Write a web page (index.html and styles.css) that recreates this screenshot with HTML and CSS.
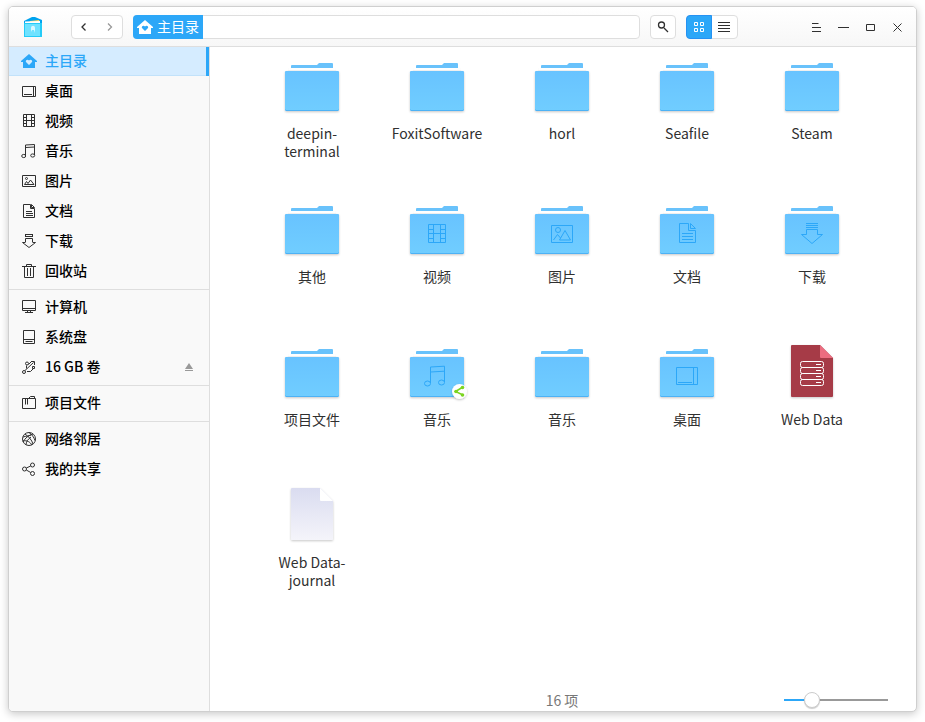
FILE: index.html
```
<!DOCTYPE html>
<html lang="zh-CN">
<head>
<meta charset="utf-8">
<meta name="viewport" content="width=device-width, initial-scale=1">
<title>主目录</title>
<link rel="stylesheet" href="styles.css">
</head>
<body>
<svg class="defs" aria-hidden="true">
  <defs>
    <linearGradient id="front" x1="0" y1="0" x2="0" y2="1"><stop offset="0" stop-color="#68c3ff"/><stop offset="1" stop-color="#70cdff"/></linearGradient>
    <linearGradient id="blank" x1="0" y1="0" x2="0" y2="1"><stop offset="0" stop-color="#dadcf0"/><stop offset="1" stop-color="#f4f4fa"/></linearGradient>
    <filter id="soft" x="-20%" y="-20%" width="140%" height="140%"><feDropShadow dx="0" dy="1" stdDeviation="1" flood-color="#000" flood-opacity=".22"/></filter>
    <symbol id="home" viewBox="0 0 16 16"><path fill="currentColor" fill-rule="evenodd" d="M8 1 16 8v1h-2v6H2V9H0V8L8 1ZM8 12l3-3c1-1.500-1.500-3.200-3-1.500C6.500 5.800 4 7.500 5 9Z"/></symbol>
  </defs>
  <symbol id="folder" viewBox="0 0 65 64">
    <path fill="#69c2fb" d="M11 10q0-1 1-1h25l2-2h13q1 0 1 1v5H11Z"/>
    <path fill="#f4f4f4" d="M9 12h46l2 4H7Z"/>
    <path fill="#fff" d="M9 12h46l1 2H8Z"/>
    <rect x="5" y="15" width="54" height="40" rx="1.500" fill="#4db2f5" filter="url(#soft)"/>
    <rect x="5" y="15" width="54" height="39" rx="1.500" fill="url(#front)"/>
  </symbol>
</svg>
<div class="window">
  <header class="titlebar">
    <svg class="logo" viewBox="0 0 20 20" aria-hidden="true">
      <path fill="#00a3ef" d="M1 4 9 0h3l7 3v3H1Z"/><path fill="#ffd25a" d="m7 4 9-1 1 3H6Z"/><path fill="#fff" d="M2 4.500 17 4v3H2Z"/><path fill="#24cbf7" d="M1 6h18v14H1Z"/><path fill="#6ee2ff" d="M2 7h15v12H2Z"/><path fill="#fff" opacity=".75" d="M8 15v-4c0-3 4-3 4 0v5l-1-3H9Z"/>
    </svg>
    <div class="group history">
      <button type="button" aria-label="后退"><svg class="ico" viewBox="0 0 16 16"><path class="thick" d="M9.500 4.500 6 8l3.500 3.500"/></svg></button>
      <button type="button" class="dim" aria-label="前进"><svg class="ico" viewBox="0 0 16 16"><path class="thick" d="M8 4.500 11.500 8 8 11.500"/></svg></button>
    </div>
    <div class="address">
      <button type="button" class="crumb"><svg class="ico"><use href="#home"/></svg><span>主目录</span></button>
      <input type="text" aria-label="地址">
    </div>
    <button type="button" class="group search" aria-label="搜索"><svg class="ico" viewBox="0 0 16 16"><circle class="thick" cx="6.500" cy="6" r="3"/><path class="thick" d="m9 9 4 4"/></svg></button>
    <div class="group views">
      <button type="button" class="on" aria-label="图标视图"><svg class="ico" viewBox="0 0 16 16"><path d="M3.500 3.500h3v3h-3zM9.500 3.500h3v3h-3zM3.500 9.500h3v3h-3zM9.500 9.500h3v3h-3z"/></svg></button>
      <button type="button" aria-label="列表视图"><svg class="ico" viewBox="0 0 16 16"><path d="M2 3.500h12M2 6.500h12M2 9.500h12M2 12.500h12"/></svg></button>
    </div>
    <div class="controls">
      <button type="button" aria-label="菜单"><svg class="ico" viewBox="0 0 16 16"><path d="M4 4.500h6.500M4 8.500h9M4 12.500h9"/></svg></button>
      <button type="button" aria-label="最小化"><svg class="ico" viewBox="0 0 16 16"><path d="M3 8.500h11"/></svg></button>
      <button type="button" aria-label="最大化"><svg class="ico" viewBox="0 0 16 16"><path d="M4.500 5.500h8v6h-8z"/></svg></button>
      <button type="button" aria-label="关闭"><svg class="ico" viewBox="0 0 16 16"><path d="m4.500 4.500 8 8M12.500 4.500l-8 8"/></svg></button>
    </div>
  </header>
  <div class="body">
    <nav class="sidebar" aria-label="位置">
      <ul>
        <li><a class="current" href="#"><svg class="ico"><use href="#home"/></svg><span>主目录</span></a></li>
        <li><a href="#"><svg class="ico" viewBox="0 0 16 16"><path d="M1.500 3.500h13v10h-13zM12.500 3.500v10M3 11.500h8"/></svg><span>桌面</span></a></li>
        <li><a href="#"><svg class="ico" viewBox="0 0 16 16"><path d="M2.500 1.500h11v12h-11zM5.500 1.500v12M10.500 1.500v12M5.500 7.500h5M2.500 4.500h3M2.500 7.500h3M2.500 10.500h3M10.500 4.500h3M10.500 7.500h3M10.500 10.500h3"/></svg><span>视频</span></a></li>
        <li><a href="#"><svg class="ico" viewBox="0 0 16 16"><path d="M4.500 12.500V2l9-.5v10.500M4.500 4.500l9-.5"/><ellipse cx="2.700" cy="13" rx="2" ry="1.600"/><ellipse cx="11.700" cy="12.500" rx="2" ry="1.600"/></svg><span>音乐</span></a></li>
        <li><a href="#"><svg class="ico" viewBox="0 0 16 16"><path d="M1.500 2.500h13v11h-13zM3.500 11.500l2-3 1.500 2L9.500 7l3.500 4.500z"/><circle cx="5.500" cy="5.500" r="1"/></svg><span>图片</span></a></li>
        <li><a href="#"><svg class="ico" viewBox="0 0 16 16"><path d="M2.500 1.500h7v4h4v9h-11zM10.500 1.500v3h3zM5 8.500h6M5 10.500h7M5 12.500h7"/></svg><span>文档</span></a></li>
        <li><a href="#"><svg class="ico" viewBox="0 0 16 16"><path d="M4 1.500h8M4 3.500h8M4.500 1.500v2M11.500 1.500v2M4.500 9V5.500h7V9M1.500 9.500h3M11.500 9.500h3M1.500 9.500 8 14.500l6.500-5"/></svg><span>下载</span></a></li>
        <li><a href="#"><svg class="ico" viewBox="0 0 16 16"><path d="M1 3.500h14M5.500 3.500v-2h5v2M3.500 3.500v11h9v-11M6.500 5v8M9.500 5v8"/></svg><span>回收站</span></a></li>
      </ul>
      <ul>
        <li><a href="#"><svg class="ico" viewBox="0 0 16 16"><path d="M1.500 1.500h13v10h-13zM1.500 9.500h13M6.500 11.500v2M9.500 11.500v2M4 13.500h8"/></svg><span>计算机</span></a></li>
        <li><a href="#"><svg class="ico" viewBox="0 0 16 16"><path d="M2.500 1.500h11v13h-11zM2.500 10.500h11M4.500 12.500h7"/></svg><span>系统盘</span></a></li>
        <li><a href="#"><svg class="ico" viewBox="0 0 16 16"><circle cx="3" cy="13" r="1.500"/><circle cx="6" cy="4.500" r="1.500"/><path d="m4 11.500 8.500-8M10 2.500h3.500V6M5.500 6.500v3M6 12.500h3.500l3-3M11.500 7.500h2v2h-2zM7.500 5.500l3-3"/></svg><span>16 GB 卷</span></a><button type="button" class="eject" aria-label="弹出"><svg class="ico" viewBox="0 0 16 16"><path class="solid" d="m8 4 4 6H4zM4 11h8v1H4z"/></svg></button></li>
      </ul>
      <ul>
        <li><a href="#"><svg class="ico" viewBox="0 0 16 16"><path d="M1.500 3.500h13v10h-13zM7.500 3.500l2-2h4v2M4.500 3.500v6M6.500 3.500v6"/></svg><span>项目文件</span></a></li>
      </ul>
      <ul>
        <li><a href="#"><svg class="ico" viewBox="0 0 16 16"><circle cx="8" cy="8" r="6.500"/><path d="M4 3c3 2 7 6 8 10M12 3C8 4 4 7 2 11M8 1.500c3 2 5 5 6 8M2 6c3-1 6-1 8-2M5 14c0-3 2-6 5-8M2 10c4-1 7 1 9 4"/></svg><span>网络邻居</span></a></li>
        <li><a href="#"><svg class="ico" viewBox="0 0 16 16"><circle cx="3.500" cy="8" r="2"/><circle cx="11.500" cy="4" r="2"/><circle cx="11.500" cy="12.500" r="2"/><path d="m5.300 7 4.400-2M5.300 9l4.400 2.500"/></svg><span>我的共享</span></a></li>
      </ul>
    </nav>
    <main class="content">
      <ul class="files">
        <li><svg class="pic"><use href="#folder"/></svg><span>deepin-terminal</span></li>
        <li><svg class="pic"><use href="#folder"/></svg><span>FoxitSoftware</span></li>
        <li><svg class="pic"><use href="#folder"/></svg><span>horl</span></li>
        <li><svg class="pic"><use href="#folder"/></svg><span>Seafile</span></li>
        <li><svg class="pic"><use href="#folder"/></svg><span>Steam</span></li>
        <li><svg class="pic"><use href="#folder"/></svg><span>其他</span></li>
        <li><svg class="pic" viewBox="0 0 65 64"><use href="#folder"/><path class="emblem" d="M23.500 25.500h17v18h-17zM28.500 25.500v18M35.500 25.500v18M28.500 34.500h7M23.500 30.500h5M23.500 34.500h5M23.500 39.500h5M35.500 30.500h5M35.500 34.500h5M35.500 39.500h5"/></svg><span>视频</span></li>
        <li><svg class="pic" viewBox="0 0 65 64"><use href="#folder"/><path class="emblem" d="M21.500 26.500h21v17h-21zM23.500 41l4-5.500 3 3.500M29.500 41l5.500-9.500 5.500 9.500z"/><circle class="emblem" cx="28" cy="31" r="2.500"/></svg><span>图片</span></li>
        <li><svg class="pic" viewBox="0 0 65 64"><use href="#folder"/><path class="emblem" d="M24.500 24.500h9v7h7v12h-16zM35.500 24.500v5h5zM27 34.500h11M27 37.500h11M27 40.500h11"/></svg><span>文档</span></li>
        <li><svg class="pic" viewBox="0 0 65 64"><use href="#folder"/><path class="emblem" d="M26 24.500h12M26 26.500h12M26 28.500h12M26.500 30.500h11v5h5L32 44.500 21.500 35.500h5z"/></svg><span>下载</span></li>
        <li><svg class="pic"><use href="#folder"/></svg><span>项目文件</span></li>
        <li><svg class="pic" viewBox="0 0 65 64"><use href="#folder"/><path class="emblem" d="M25.500 41V25l14-.8V40M25.500 30l14-.8"/><ellipse class="emblem" cx="22.500" cy="41.500" rx="3" ry="2.500"/><ellipse class="emblem" cx="36.500" cy="40.500" rx="3" ry="2.500"/><circle cx="54.500" cy="49.500" r="7.500" fill="#fff" filter="url(#soft)"/><path d="m58 45-7.500 4.500L58 53" fill="none" stroke="#7bd420" stroke-width="1.500"/><g fill="#7bd420"><circle cx="51" cy="49.500" r="1.800"/><circle cx="57.500" cy="45.500" r="1.800"/><circle cx="57.500" cy="53" r="1.800"/></g></svg><span>音乐</span></li>
        <li><svg class="pic"><use href="#folder"/></svg><span>音乐</span></li>
        <li><svg class="pic" viewBox="0 0 65 64"><use href="#folder"/><path class="emblem" d="M21.500 25.500h21v17h-21zM38.500 25.500v17M23 40.500h14"/></svg><span>桌面</span></li>
        <li><svg class="pic" viewBox="0 0 65 64"><path d="M12 3h28l13 13v38q0 1-1 1H12q-1 0-1-1V4q0-1 1-1Z" fill="#a63a46" filter="url(#soft)"/><path d="M40 3v12q0 1 1 1h12Z" fill="#ec6d80"/><g fill="none" stroke="#fff"><rect x="20.500" y="19.500" width="23" height="6" rx="2"/><rect x="20.500" y="25.500" width="23" height="6" rx="2"/><rect x="20.500" y="31.500" width="23" height="6" rx="2"/><rect x="20.500" y="37.500" width="23" height="6" rx="2"/><path d="M36 22.500h5M36 28.500h5M36 34.500h5M36 40.500h5"/></g></svg><span>Web Data</span></li>
        <li><svg class="pic" viewBox="0 0 65 64"><path d="M12 3h28l13 13v38q0 1-1 1H12q-1 0-1-1V4q0-1 1-1Z" fill="url(#blank)" filter="url(#soft)"/><path d="M40 3v12q0 1 1 1h12Z" fill="#fff"/></svg><span>Web Data-journal</span></li>
      </ul>
      <footer class="status">
        <span class="count">16 项</span>
        <input type="range" min="0" max="100" value="23" aria-label="图标大小">
      </footer>
    </main>
  </div>
</div>
</body>
</html>
```
FILE: styles.css
```
* { box-sizing: border-box; }

body {
  margin: 0;
  padding: 6px 8px 10px;
  background: #fff;
  color: #303030;
  font: 14px/18px "Noto Sans CJK SC", "Noto Sans", sans-serif;
}

ul { list-style: none; margin: 0; padding: 0; }

button {
  display: flex;
  align-items: center;
  justify-content: center;
  padding: 0;
  border: 0;
  background: none;
  color: inherit;
  font: inherit;
}

.defs { position: absolute; width: 0; height: 0; }

.ico {
  flex: none;
  width: 16px;
  height: 16px;
  fill: none;
  stroke: currentColor;
}
.ico use { stroke: none; }
.ico .thick { stroke-width: 1.3; }
.ico .solid { fill: currentColor; stroke: none; }

.window {
  display: flex;
  flex-direction: column;
  min-height: calc(100vh - 16px);
  border: 1px solid #cfcfcf;
  border-radius: 5px;
  background: #fff;
  box-shadow: 0 2px 8px rgba(0, 0, 0, .22);
  overflow: hidden;
}

.titlebar {
  position: relative;
  z-index: 1;
  display: flex;
  align-items: center;
  gap: 10px;
  height: 39px;
  padding: 1px 6px 0 14px;
  background: linear-gradient(#fff, #f7f7f7);
  box-shadow: 0 1px #dedede;
}

.logo { width: 20px; height: 20px; margin-right: 18px; }

.group {
  display: flex;
  height: 24px;
  border: 1px solid #dedede;
  border-radius: 4px;
  background: #fff;
}
.group button { width: 24px; }
.history, .views { width: 52px; }
.dim { color: #999; }
.search { width: 26px; }
.views .on {
  width: 26px;
  margin: -1px 0 -1px -1px;
  border: 1px solid #2592f3;
  border-radius: 4px 0 0 4px;
  background: #2ca7f8;
  color: #fff;
}

.address {
  display: flex;
  flex: 1;
  min-width: 0;
  height: 24px;
  border: 1px solid #dedede;
  border-radius: 4px;
  background: #fff;
}
.crumb {
  flex: none;
  gap: 4px;
  margin: -1px 0 -1px -1px;
  padding: 0 4px;
  border-radius: 4px 0 0 4px;
  background: #2ca7f8;
  color: #fff;
}
.crumb span,
.sidebar a span { padding-bottom: 2px; }
.address input {
  flex: 1;
  min-width: 0;
  border: 0;
  background: none;
  font: inherit;
}

.controls { display: flex; margin-left: 54px; }
.controls button { width: 27px; height: 24px; }

.body { display: flex; flex: 1; }

.sidebar {
  flex: none;
  width: 201px;
  border-right: 1px solid #dedede;
  background: #f9f9f9;
  color: #000;
  font-weight: 500;
}
.sidebar ul + ul {
  margin-top: 3px;
  padding-top: 2px;
  border-top: 1px solid #dedede;
}
.sidebar li { display: flex; align-items: center; }
.sidebar a {
  display: flex;
  flex: 1;
  align-items: center;
  gap: 8px;
  height: 30px;
  padding-left: 12px;
  color: inherit;
  text-decoration: none;
}
.sidebar a .ico { color: #303030; }
.sidebar .current,
.sidebar .current .ico { color: #2ca7f8; }
.sidebar .current {
  border-right: 3px solid #2ca7f8;
  background: #d5ecff;
  box-shadow: inset 0 -1px #c2e2fa;
}
.eject { margin-right: 12px; }
.eject .ico { color: #999; }

.content {
  display: flex;
  flex: 1;
  flex-direction: column;
  min-width: 0;
}

.files {
  display: grid;
  grid-template-columns: repeat(auto-fill, 125px);
  grid-auto-rows: 143px;
  justify-content: center;
  flex: 1;
  padding: 10px 1px 0 0;
}
.files li {
  display: flex;
  flex-direction: column;
  align-items: center;
  gap: 4px;
}
.files span { max-width: 92px; padding-right: 1px; text-align: center; }
.pic { width: 65px; height: 64px; }
.emblem { fill: none; stroke: #2ca7f8; }

.status {
  display: grid;
  grid-template-columns: 1fr auto 1fr;
  align-items: center;
  height: 23px;
  padding-right: 28px;
  padding-left: 26px;
  color: #777;
}
.count { grid-column: 2; }
.status input {
  justify-self: end;
  width: 104px;
  height: 16px;
  margin: 0;
  appearance: none;
  background: linear-gradient(to right, #2ca7f8 28px, #999 28px) center / 100% 2px no-repeat;
}
.status input::-webkit-slider-thumb {
  appearance: none;
  width: 16px;
  height: 16px;
  border: 1px solid #ccc;
  border-radius: 50%;
  background: #fff;
  box-shadow: 0 1px 1px rgba(0, 0, 0, .2);
}
```
